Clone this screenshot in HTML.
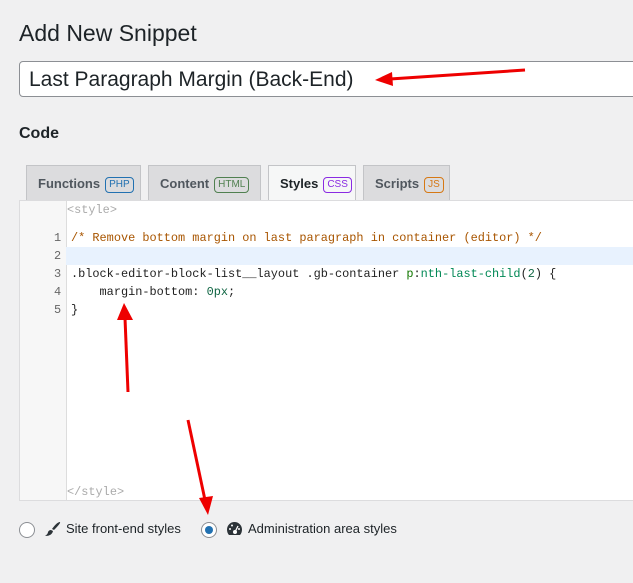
<!DOCTYPE html><html><head><style>
body{margin:0;width:633px;height:583px;background:#f0f0f1;font-family:"Liberation Sans",sans-serif;position:relative;overflow:hidden;color:#1d2327}
.a{position:absolute}
.tab{position:absolute;top:165px;height:35px;background:#dcdcde;border:1px solid #c3c4c7;border-bottom:none;box-sizing:border-box;font-size:13px;font-weight:bold;color:#50575e;line-height:35px;padding-left:11px}
.b{display:inline-block;font-size:10px;font-weight:normal;border:1px solid;border-radius:4px;padding:0 3px;line-height:14px;margin-left:5px;vertical-align:1px}
.code{font-family:"Liberation Mono",monospace;font-size:11.9px;position:absolute;left:71px;white-space:pre}
.ln{font-family:"Liberation Mono",monospace;font-size:11.9px;position:absolute;left:54px;color:#666}
</style></head><body>
<div class="a" style="left:19px;top:20px;font-size:23px;">Add New Snippet</div>
<div class="a" style="left:19px;top:61px;width:620px;height:36px;background:#fff;border:1px solid #8c8f94;border-radius:4px;box-sizing:border-box;font-size:21px;line-height:36px;padding-left:9px">Last Paragraph Margin (Back-End)</div>
<div class="a" style="left:19px;top:125px;font-size:16px;font-weight:bold">Code</div>
<div class="tab" style="left:26px;width:115px">Functions<span class="b" style="color:#2271b1">PHP</span></div>
<div class="tab" style="left:148px;width:113px">Content<span class="b" style="color:#508050">HTML</span></div>
<div class="tab" style="left:268px;width:88px;background:#f6f7f7;color:#1d2327;height:36px">Styles<span class="b" style="color:#8a2be2">CSS</span></div>
<div class="tab" style="left:363px;width:87px">Scripts<span class="b" style="color:#d67814">JS</span></div>
<div class="a" style="left:19px;top:200px;width:620px;height:301px;background:#fff;border:1px solid #dcdcde;box-sizing:border-box"></div>
<div class="a" style="left:20px;top:201px;width:46px;height:299px;background:#f7f7f7;border-right:1px solid #ddd"></div>
<div class="a" style="left:66px;top:247px;width:570px;height:18px;background:#e8f2fe"></div>
<div class="code" style="left:67px;top:203px;color:#aaa">&lt;style&gt;</div>
<div class="ln" style="top:231px">1</div><div class="code" style="top:231px;color:#a85500">/* Remove bottom margin on last paragraph in container (editor) */</div>
<div class="ln" style="top:249px">2</div>
<div class="ln" style="top:267px">3</div><div class="code" style="top:267px;color:#222">.block-editor-block-list__layout .gb-container <span style="color:#170">p</span>:<span style="color:#085">nth-last-child</span>(<span style="color:#164">2</span>) {</div>
<div class="ln" style="top:285px">4</div><div class="code" style="top:285px;color:#222">    margin-bottom: <span style="color:#164">0px</span>;</div>
<div class="ln" style="top:303px">5</div><div class="code" style="top:303px;color:#222">}</div>
<div class="code" style="left:67px;top:485px;color:#aaa">&lt;/style&gt;</div>
<div class="a" style="left:19px;top:522px;width:14px;height:14px;border:1px solid #8c8f94;border-radius:50%;background:#fff"></div>
<svg class="a" style="left:44px;top:521px" width="18" height="17" viewBox="0 0 18 17"><path d="M16 1 Q17 2 10 9 L8 8 Q13 1 16 1Z M7 9 L9 10 Q8 15 1 15 Q4 13 4 11 Q5 9 7 9Z" fill="#2c3338"/></svg>
<div class="a" style="left:66px;top:521px;font-size:13px">Site front-end styles</div>
<div class="a" style="left:201px;top:522px;width:14px;height:14px;border:1px solid #8c8f94;border-radius:50%;background:#fff"><div class="a" style="left:3px;top:3px;width:8px;height:8px;border-radius:50%;background:#2271b1"></div></div>
<svg class="a" style="left:226px;top:521px" width="17" height="15" viewBox="0 0 17 15"><path d="M8.5 1A7.5 7.5 0 0 0 1 8.5Q1 12 3 14H14Q16 12 16 8.5A7.5 7.5 0 0 0 8.5 1Z" fill="#2c3338"/><circle cx="9" cy="11" r="2" fill="#fff"/><path d="M9 11L12 5" stroke="#fff" stroke-width="1.3"/><circle cx="4" cy="8" r="1" fill="#fff"/><circle cx="6" cy="4.5" r="1" fill="#fff"/><circle cx="13" cy="8" r="1" fill="#fff"/></svg>
<div class="a" style="left:248px;top:521px;font-size:13px">Administration area styles</div>
<svg class="a" style="left:0;top:0" width="633" height="583"><g stroke="#e00" stroke-width="3" fill="#e00"><line x1="525" y1="70" x2="390" y2="79"/><line x1="128" y1="392" x2="125" y2="318"/><line x1="188" y1="420" x2="205" y2="500"/></g><g fill="#e00"><polygon points="375,80 392,72 393,86"/><polygon points="124,303 117,320 133,320"/><polygon points="208,515 199,498 213,496"/></g></svg>
</body></html>
